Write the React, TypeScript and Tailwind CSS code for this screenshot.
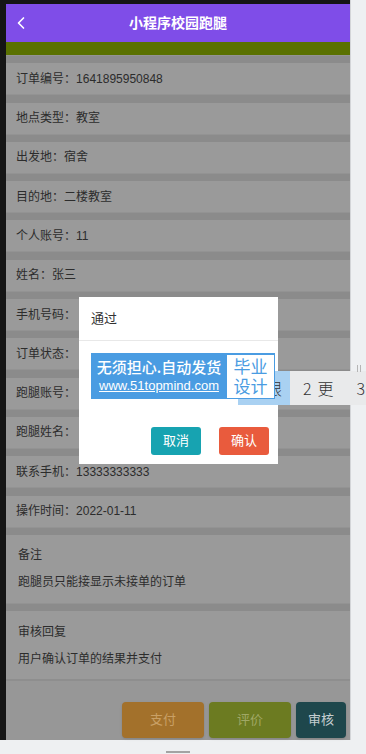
import { ChevronLeft } from "lucide-react"

const rows = [
  ["订单编号", "1641895950848"],
  ["地点类型", "教室"],
  ["出发地", "宿舍"],
  ["目的地", "二楼教室"],
  ["个人账号", "11"],
  ["姓名", "张三"],
  ["手机号码", ""],
  ["订单状态", ""],
  ["跑腿账号", ""],
  ["跑腿姓名", ""],
  ["联系手机", "13333333333"],
  ["操作时间", "2022-01-11"],
]

function Sep() {
  return <div className="h-[8.3px] bg-[#8b8b8b] border-t border-[#939393] shrink-0" />
}

export default function App() {
  return (
    <div className="relative w-[366px] h-[754px] bg-[#eef0f2] overflow-hidden font-[Liberation_Sans,Noto_Sans_CJK_SC,sans-serif] text-[#2c2c2c]">
      <div className="flex h-[740px]">
        <div className="w-[6px] bg-[#151515]" />
        <div className="w-[344px] flex flex-col">
          <div className="h-[4px] bg-[#151515] shrink-0" />
          {/* Header */}
          <div className="relative h-[38px] bg-[#7f4de8] flex items-center justify-center shrink-0">
            <ChevronLeft className="absolute left-[5px] top-[9px] w-[20px] h-[20px] text-white" strokeWidth={2} />
            <span className="text-white font-bold text-[14px]">小程序校园跑腿</span>
          </div>
          <div className="h-[13px] bg-[#5a7100] shrink-0" />
          <Sep />
          {rows.map(([k, v], i) => (
            <div key={k}>
              {i > 0 && <Sep />}
              <div className="h-[31px] bg-[#9a9a9a] px-[10px] flex items-center text-[12px]">
                {k}：{v}
              </div>
            </div>
          ))}
          <Sep />
          <div className="h-[68px] bg-[#9a9a9a] px-[12px] flex flex-col justify-center gap-[9px] text-[12px]">
            <div>备注</div>
            <div>跑腿员只能接显示未接单的订单</div>
          </div>
          <Sep />
          <div className="h-[68px] bg-[#9a9a9a] px-[12px] flex flex-col justify-center gap-[9px] text-[12px]">
            <div>审核回复</div>
            <div>用户确认订单的结果并支付</div>
          </div>
          {/* Bottom actions */}
          <div className="flex-1 bg-[#979797] border-t-2 border-[#8e8e8e] flex items-start justify-end gap-[5px] pr-[4px] pt-[21px] text-[13px]">
            <div className="w-[82px] h-[36px] rounded-[4px] bg-[#a3712b] text-[#c9a066] flex items-center justify-center shadow-sm">支付</div>
            <div className="w-[82px] h-[36px] rounded-[4px] bg-[#6c7b21] text-[#a0a865] flex items-center justify-center shadow-sm">评价</div>
            <div className="w-[50px] h-[36px] rounded-[4px] bg-[#1e474c] text-[#c4ced0] flex items-center justify-center shadow-sm">审核</div>
          </div>
        </div>
        <div className="w-[16px] border-l border-[#d3d5d8] bg-[#eef0f2]" />
      </div>
      <div className="h-[14px] flex justify-start">
        <div className="ml-[166px] mt-[11px] w-[24px] h-[2px] bg-[#a3a3a3]" />
      </div>

      {/* Dialog */}
      <div className="absolute left-[79px] top-[297px] w-[199px] h-[167px] bg-white flex flex-col">
        <div className="h-[44px] flex items-center pl-[12px] text-[13px] text-[#333] border-b border-[#e8e8e8]">通过</div>
        <div className="mt-auto mb-[9px] flex justify-end gap-[18px] pr-[9px] text-[13px] text-white">
          <div className="w-[50px] h-[28px] rounded-[3px] bg-[#17a3b1] flex items-center justify-center">取消</div>
          <div className="w-[50px] h-[28px] rounded-[3px] bg-[#e95b3d] flex items-center justify-center">确认</div>
        </div>
      </div>

      {/* Input method candidate bar */}
      <div className="absolute left-[238px] top-[371px] w-[128px] h-[34px] bg-[#e9eaeb] flex items-center text-[16px] text-[#333] font-[Noto_Sans_CJK_SC,sans-serif] font-light">
        <div className="w-[52px] h-full bg-[#a9d1f2] flex items-center justify-end pr-[8px]">限</div>
        <span className="ml-[13px]">2</span>
        <span className="ml-[6px]">更</span>
        <span className="ml-[23px]">3</span>
      </div>
      <div className="absolute left-[357px] top-[365px] flex gap-[2px]">
        <div className="w-[1px] h-[7px] bg-[#b5b5b5]" />
        <div className="w-[1px] h-[7px] bg-[#b5b5b5]" />
      </div>

      {/* Watermark */}
      <div className="absolute left-[91px] top-[353px] w-[184px] h-[46px] bg-[#4a9ce2] flex items-center font-[Noto_Sans_CJK_SC,sans-serif]">
        <div className="w-[136px] flex flex-col items-center text-white">
          <div className="text-[15px] font-medium leading-[20px]">无须担心.自动发货</div>
          <div className="text-[13px] underline leading-[18px] font-[Liberation_Sans,sans-serif]">www.51topmind.com</div>
        </div>
        <div className="w-[47px] h-[43px] bg-white text-[#4a9ce2] text-[17px] leading-[20px] flex flex-col items-center justify-center">
          <span>毕业</span>
          <span>设计</span>
        </div>
      </div>
    </div>
  )
}
